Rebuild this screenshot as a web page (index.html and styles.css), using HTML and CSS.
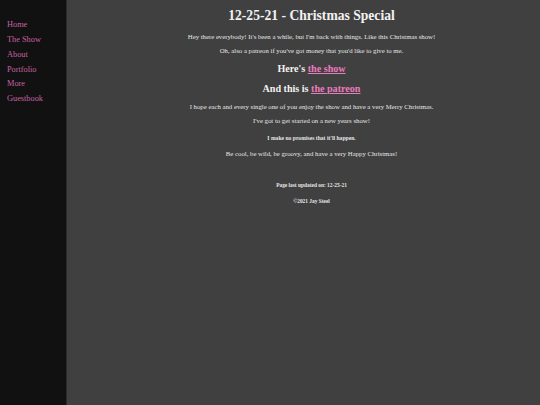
FILE: index.html
```html
<!DOCTYPE html>
<html>
<head>
<meta charset="utf-8">
<link rel="stylesheet" href="styles.css">
</head>
<body>
<div class="page">
  <nav class="sidebar">
    <a href="#">Home</a>
    <a href="#">The Show</a>
    <a href="#">About</a>
    <a href="#">Portfolio</a>
    <a href="#">More</a>
    <a href="#">Guestbook</a>
  </nav>
  <main class="main">
    <h1 class="title">12-25-21 - Christmas Special</h1>
    <p class="text">Hey there everybody! It's been a while, but I'm back with things. Like this Christmas show!</p>
    <p class="text">Oh, also a patreon if you've got money that you'd like to give to me.</p>
    <h2 class="sub">Here's <a href="#">the show</a></h2>
    <h2 class="sub">And this is <a href="#">the patreon</a></h2>
    <p class="text">I hope each and every single one of you enjoy the show and have a very Merry Christmas.</p>
    <p class="text">I've got to get started on a new years show!</p>
    <p class="tiny">I make no promises that it'll happen.</p>
    <p class="text">Be cool, be wild, be groovy, and have a very Happy Christmas!</p>
    <p class="foot foot-first">Page last updated on: 12-25-21</p>
    <p class="foot">©2021 Jay Steel</p>
  </main>
</div>
</body>
</html>
```
FILE: styles.css
```css
html, body {
  margin: 0;
  padding: 0;
  height: 100%;
}
body {
  background: #404040;
  font-family: "Liberation Serif", "Times New Roman", serif;
  color: #e6e6e6;
}
.page {
  display: flex;
  min-height: 405px;
}
.sidebar {
  width: 67px;
  flex: none;
  background: #111111;
  border-right: 1px solid #2a2a2a;
  display: flex;
  flex-direction: column;
  padding: 19.3px 0 0 7px;
  box-sizing: border-box;
  gap: 3.8px;
}
.sidebar a {
  color: #c862a4;
  text-decoration: none;
  font-size: 8.3px;
  line-height: 11px;
}
.main {
  flex: 1;
  padding: 8px 0 0 16px;
  text-align: center;
}
.title {
  font-size: 13.6px;
  line-height: 16px;
  margin: 0 0 9px;
  color: #f2f2f2;
}
.text {
  font-size: 6.75px;
  line-height: 8px;
  margin: 6px 0 0;
}
.sub {
  font-size: 10.1px;
  line-height: 12px;
  margin: 8px 0 8px;
  color: #f2f2f2;
}
.sub a {
  color: #e87cbd;
}
.tiny {
  font-size: 5.65px;
  font-weight: bold;
  line-height: 8px;
  margin: 9px 0 8px;
}
.foot {
  font-size: 5.4px;
  font-weight: bold;
  line-height: 8px;
  margin: 8px 0 0;
}
.foot-first {
  margin-top: 23px;
}
```
